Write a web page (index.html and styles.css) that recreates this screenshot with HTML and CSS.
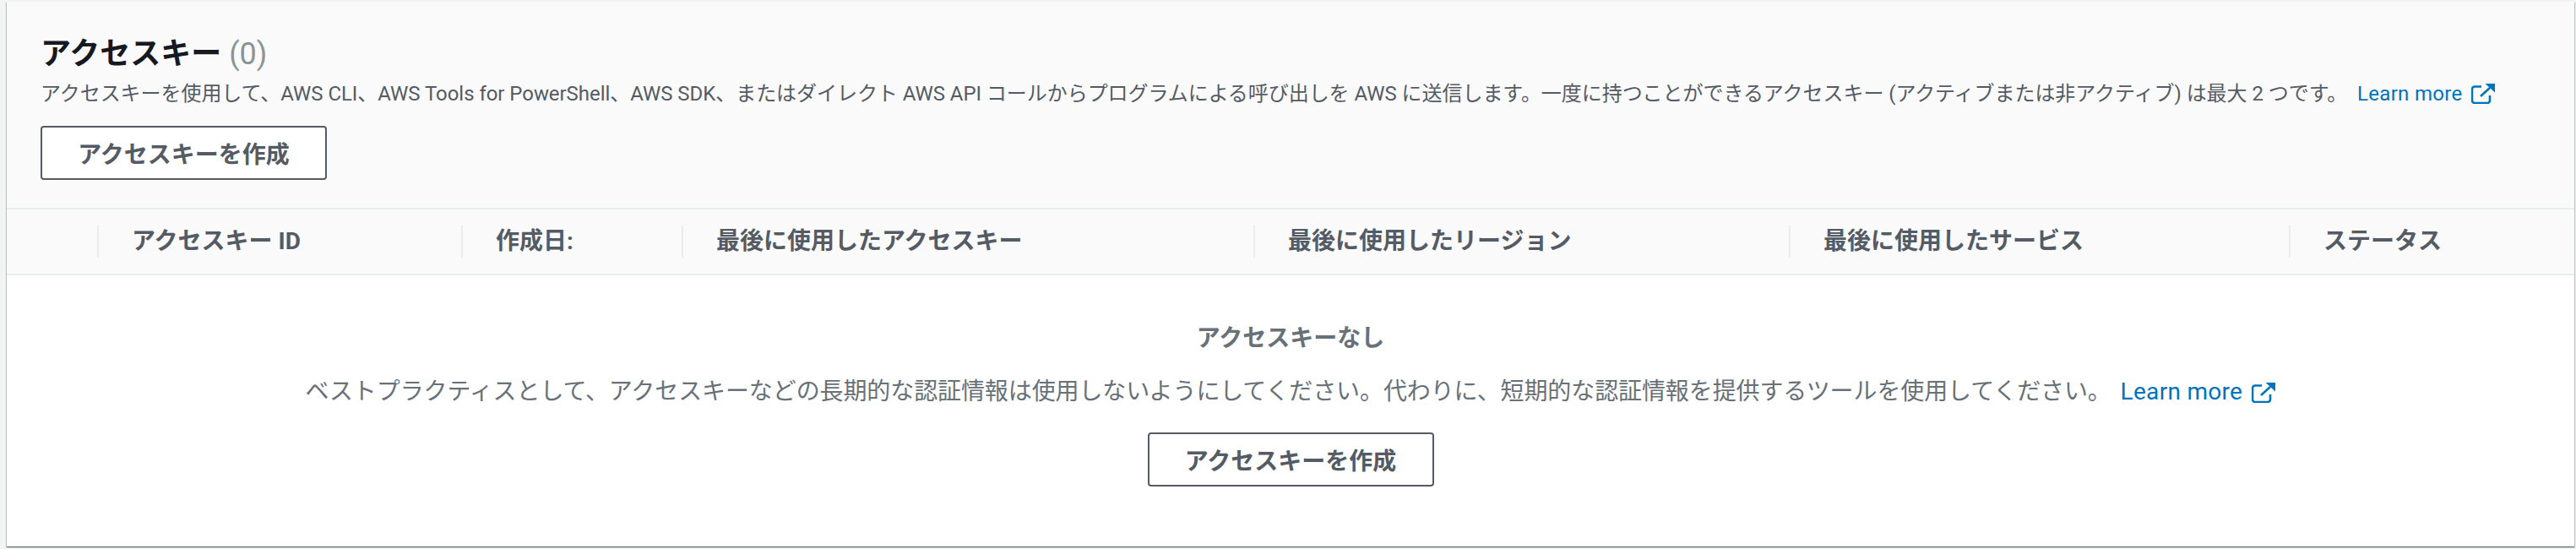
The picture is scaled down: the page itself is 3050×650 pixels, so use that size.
FILE: index.html
```html
<!DOCTYPE html>
<html lang="ja">
<head>
    <meta charset="UTF-8">
    <title>アクセスキー</title>
    <link rel="stylesheet" href="styles.css">
</head>
<body>
    <div class="panel">
        <div class="panel-header">
            <h2>アクセスキー <span class="count">(0)</span></h2>
            <p class="desc">アクセスキーを使用して、AWS CLI、AWS Tools for PowerShell、AWS SDK、またはダイレクト AWS API コールからプログラムによる呼び出しを AWS に送信します。一度に持つことができるアクセスキー (アクティブまたは非アクティブ) は最大 2 つです。
                <a class="link" href="#">Learn more
                    <svg class="ext-icon" viewBox="0 0 28 24"><path d="M12 3.5H4a3 3 0 0 0-3 3V20a3 3 0 0 0 3 3h15a3 3 0 0 0 3-3v-6" /><path d="M11 15 22 5" /><path class="fill" d="M16.5 0H28v10.5z" /></svg>
                </a>
            </p>
            <button class="btn">アクセスキーを作成</button>
        </div>
        <div class="table-head">
            <div class="th-select"></div>
            <div class="th">アクセスキー ID</div>
            <div class="th">作成日:</div>
            <div class="th">最後に使用したアクセスキー</div>
            <div class="th">最後に使用したリージョン</div>
            <div class="th">最後に使用したサービス</div>
            <div class="th">ステータス</div>
        </div>
        <div class="empty">
            <div class="empty-title">アクセスキーなし</div>
            <p class="empty-text">ベストプラクティスとして、アクセスキーなどの長期的な認証情報は使用しないようにしてください。代わりに、短期的な認証情報を提供するツールを使用してください。
                <a class="link" href="#">Learn more
                    <svg class="ext-icon" viewBox="0 0 28 24"><path d="M12 3.5H4a3 3 0 0 0-3 3V20a3 3 0 0 0 3 3h15a3 3 0 0 0 3-3v-6" /><path d="M11 15 22 5" /><path class="fill" d="M16.5 0H28v10.5z" /></svg>
                </a>
            </p>
            <button class="btn">アクセスキーを作成</button>
        </div>
    </div>
</body>
</html>
```

FILE: styles.css
```css
html,
body {
    margin: 0;
    padding: 0;
    height: 100%;
}
body {
    background-color: #f2f3f3;
    padding: 2px 2px 3px 8px;
    box-sizing: border-box;
    font-family: Roboto, "Noto Sans CJK JP", sans-serif;
    color: #545b64;
}
.panel {
    height: 100%;
    background-color: #fff;
    box-shadow: 0 1px 1px 0 rgba(0, 28, 36, 0.5), 1px 1px 1px 0 rgba(0, 28, 36, 0.15), -1px 1px 1px 0 rgba(0, 28, 36, 0.15);
    display: flex;
    flex-direction: column;
}
.panel-header {
    height: 246px;
    box-sizing: border-box;
    padding: 38px 40px 0 40px;
    background-color: #fafafa;
    border-bottom: 2px solid #eaeded;
}
h2 {
    margin: 0;
    font-size: 36px;
    line-height: 48px;
    font-weight: 700;
    color: #16191f;
}
.count {
    font-weight: 400;
    color: #879596;
}
.desc {
    margin: 6px 0 0;
    font-size: 24px;
    line-height: 34px;
    white-space: nowrap;
    letter-spacing: -0.05px;
}
.link {
    color: #0073bb;
    text-decoration: none;
    margin-left: 6px;
    white-space: nowrap;
    letter-spacing: 0.3px;
}
.ext-icon {
    width: 28px;
    height: 24px;
    margin-left: 4px;
    vertical-align: -4px;
    fill: none;
    stroke: #0073bb;
    stroke-width: 2.6;
}
.ext-icon .fill {
    fill: #0073bb;
    stroke: none;
}
.btn {
    display: block;
    width: 339px;
    height: 64px;
    padding: 0;
    background-color: #fff;
    border: 2px solid #545b64;
    border-radius: 4px;
    font-family: inherit;
    font-size: 28px;
    font-weight: 700;
    color: #545b64;
}
.panel-header .btn {
    margin-top: 21px;
}
.table-head {
    height: 78px;
    box-sizing: border-box;
    display: grid;
    grid-template-columns: 107px 431px 261px 677px 634px 592px 1fr;
    align-items: center;
    background-color: #fafafa;
    border-bottom: 2px solid #eaeded;
}
.th {
    border-left: 2px solid #eaeded;
    padding-left: 39px;
    font-size: 28px;
    line-height: 38px;
    font-weight: 700;
    white-space: nowrap;
}
.empty {
    flex: 1;
    display: flex;
    flex-direction: column;
    align-items: center;
    padding-top: 56px;
    color: #687078;
}
.empty-title {
    font-size: 28px;
    line-height: 38px;
    font-weight: 700;
}
.empty-text {
    margin: 25px 0 0;
    font-size: 28px;
    line-height: 38px;
    white-space: nowrap;
    letter-spacing: -0.1px;
}
.empty-text .link {
    margin-left: 4px;
}
.empty .btn {
    margin-top: 29px;
}
```
